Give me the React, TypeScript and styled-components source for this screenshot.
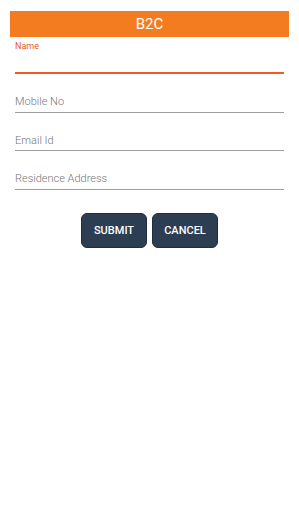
import React from 'react'
import styled, { createGlobalStyle } from 'styled-components'

const GlobalStyle = createGlobalStyle`
  html, body {
    margin: 0;
    padding: 0;
    background: #fff;
    font-family: Roboto, 'Liberation Sans', sans-serif;
  }
`

export default function App() {
  return (
    <>
      <GlobalStyle />
      <Page>
        <Header>B2C</Header>
        <Form>
          <Field $active>
            <Label>Name</Label>
            <Input $active />
          </Field>
          <Field>
            <Input placeholder="Mobile No" />
          </Field>
          <Field>
            <Input placeholder="Email Id" />
          </Field>
          <Field>
            <Input placeholder="Residence Address" />
          </Field>
          <Actions>
            <Button>SUBMIT</Button>
            <Button>CANCEL</Button>
          </Actions>
        </Form>
      </Page>
    </>
  )
}

const Page = styled.div`
  padding: 11px 10px 0 10px;
  height: 512px;
  box-sizing: border-box;
`

const Header = styled.div`
  height: 26px;
  background: #f47c20;
  color: #fff;
  font-size: 15px;
  display: flex;
  align-items: center;
  justify-content: center;
`

const Form = styled.div`
  display: flex;
  flex-direction: column;
  padding: 0 5px;
`

const Field = styled.div<{ $active?: boolean }>`
  display: flex;
  flex-direction: column;
  margin-top: ${(p) => (p.$active ? '3px' : '17.5px')};
`

const Label = styled.label`
  font-size: 9px;
  font-weight: 400;
  color: #e8582a;
  line-height: 12px;
`

const Input = styled.input<{ $active?: boolean }>`
  border: none;
  outline: none;
  border-bottom: ${(p) => (p.$active ? '2px solid #f15a22' : '1px solid #9e9e9e')};
  height: 20px;
  padding: 0;
  font-family: Roboto, 'Liberation Sans', sans-serif;
  font-weight: 300;
  font-size: 11px;
  color: #333;
  background: transparent;
  ::placeholder {
    color: #8f8f8f;
  }
`

const Actions = styled.div`
  display: flex;
  justify-content: center;
  gap: 5px;
  margin-top: 23px;
`

const Button = styled.button`
  width: 66px;
  height: 35px;
  border: 1px solid #1f2d3d;
  border-radius: 6px;
  background: #2d3e53;
  color: #fff;
  font-family: Roboto, 'Liberation Sans', sans-serif;
  font-weight: 500;
  font-size: 11px;
  padding: 0;
`
